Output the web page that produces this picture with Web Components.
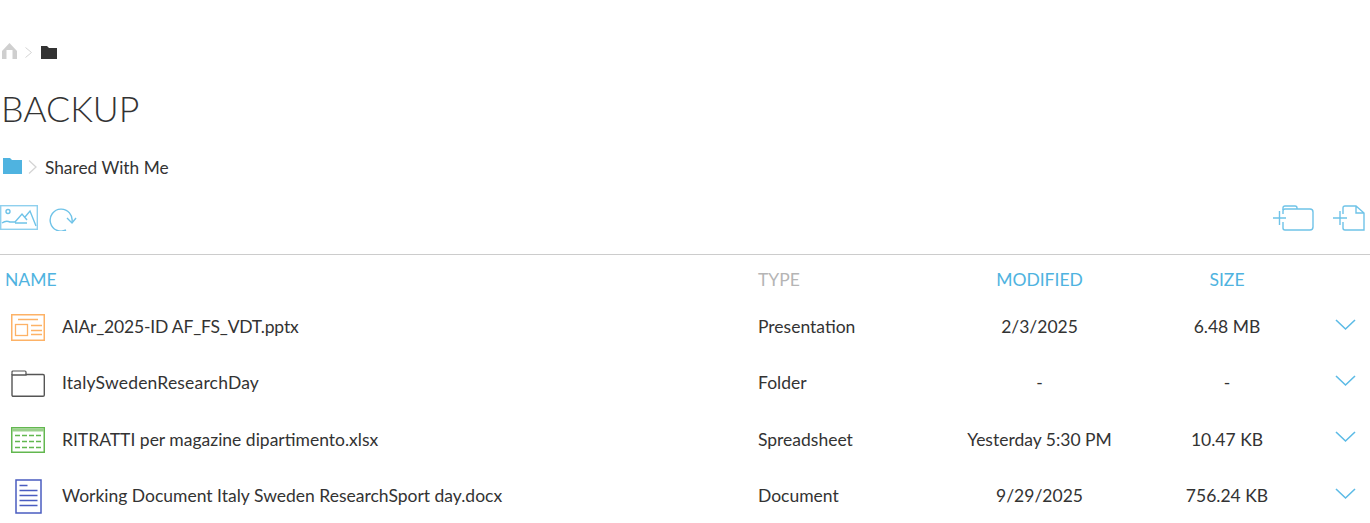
<!DOCTYPE html>
<html lang="en">
  <head>
    <meta charset="UTF-8" />
    <title>Backup</title>
    <style>
      html, body { margin: 0; height: 523px; overflow: hidden; background: #fff; }
      body { font-family: Lato, "Liberation Sans", sans-serif; color: #333; }
    </style>
  </head>
  <body>
    <template id="top-crumbs">
      <style>
        :host { display: flex; align-items: center; height: 20px; padding: 42px 0 0 2px; }
        svg { display: block; }
        .home { margin-top: -2px; }
        .sep { margin: 0 9px 0 8px; }
        .folder { margin-top: 1px; }
      </style>
      <svg class="home" width="15" height="16" viewBox="0 0 15 16"><path fill="#cfcfcf" d="M7.5 0 L15 8 V16 H10.5 V7 H4.5 V16 H0 V8 Z"/></svg>
      <svg class="sep" width="7" height="11" viewBox="0 0 7 11"><path fill="none" stroke="#d4d4d4" d="M0.5 0.5 L6.5 5.5 L0.5 10.5"/></svg>
      <svg class="folder" width="16" height="13" viewBox="0 0 16 13"><path fill="#333" d="M0 0 H6 L8 2 H16 V13 H0 Z"/></svg>
    </template>

    <template id="page-title">
      <style>
        :host { display: block; margin-top: 25px; padding-left: 1px; font-size: 35.7px; line-height: 44px; font-weight: 300; color: #333; }
      </style>
      <slot></slot>
    </template>

    <template id="path-bar">
      <style>
        :host { display: flex; align-items: center; height: 24px; margin-top: 24px; padding-left: 3px; font-size: 17.3px; color: #333; }
        svg { display: block; }
        .folder { margin-top: -3px; }
        .sep { margin: -1px 8px 0 6px; }
      </style>
      <svg class="folder" width="19" height="16" viewBox="0 0 19 16"><path fill="#4fb3e0" d="M0 0 H7 L9 2 H19 V16 H0 Z"/></svg>
      <svg class="sep" width="9" height="14" viewBox="0 0 9 14"><path fill="none" stroke="#d4d4d4" stroke-width="1.3" d="M1 0.5 L8 7 L1 13.5"/></svg>
      <slot></slot>
    </template>

    <template id="tool-bar">
      <style>
        :host { display: flex; justify-content: space-between; align-items: center; height: 40px; margin-top: 19px; margin-bottom: 16px; padding: 0 5px 0 0; }
        .group { display: flex; align-items: center; }
        svg { display: block; fill: none; stroke: #6fc3e8; stroke-width: 1.4; }
        .picture { margin-top: -2px; }
      </style>
      <div class="group" style="gap: 11px">
        <svg class="picture" width="38" height="25" viewBox="0 0 38 25">
          <rect x="0.7" y="0.7" width="36.6" height="23.6" stroke="#8fd0ee"/>
          <circle cx="8" cy="6.5" r="2"/>
          <path d="M2 18 Q6 15 10 17 H15 L22 9 L27 15 M15 18 H27 M25 12 L30 6 L36 21"/>
        </svg>
        <svg width="28" height="25" viewBox="0 0 28 25">
          <path d="M17 24 A11 11 0 1 1 23 16"/>
          <path d="M18 12 L23 17 L27 12"/>
        </svg>
      </div>
      <div class="group" style="gap: 19px">
        <svg width="42" height="26" viewBox="0 0 42 26">
          <path d="M1 13 H14 M7.5 6 V20"/>
          <path d="M11 5 V3 Q11 1 13 1 H23 Q25 1 25 3 V4"/>
          <path d="M11 9 V6 Q11 4 13 4 H38 Q41 4 41 7 V22 Q41 25 38 25 H13 Q11 25 11 23 V17"/>
        </svg>
        <svg width="32" height="26" viewBox="0 0 32 26">
          <path d="M0 13 H14 M7 6 V20"/>
          <path d="M10 9 V3 Q10 1 12 1 H23 L31 8 V25 H12 Q10 25 10 23 V17 M23 1 V8 H31"/>
        </svg>
      </div>
    </template>

    <template id="list-head">
      <style>
        :host { display: grid; grid-template-columns: 758px 190px 183px 192px; align-items: center; box-sizing: border-box; height: 44.4px; padding-top: 5px; border-top: 1px solid #ccc; font-size: 17.5px; color: #4fb3e0; }
        .name { padding-left: 5px; }
        .type { color: #b5b5b5; }
        .mid { text-align: center; }
      </style>
      <div class="name">NAME</div><div class="type">TYPE</div><div class="mid">MODIFIED</div><div class="mid">SIZE</div>
    </template>

    <template id="file-row">
      <style>
        :host { display: grid; grid-template-columns: 62px 696px 190px 183px 192px 1fr; align-items: center; height: 56.4px; font-size: 17.5px; color: #333; }
        .ico { display: flex; justify-content: center; padding: 2px 6px 0 0; }
        .label { letter-spacing: var(--name-spacing, 0); }
        .mid { text-align: center; }
        .arrow { display: flex; margin: -4px 0 0 12px; }
        svg { display: block; }
      </style>
      <div class="ico"><slot name="icon"></slot></div>
      <div class="label"><slot></slot></div>
      <div id="type"></div>
      <div class="mid" id="modified"></div>
      <div class="mid" id="size"></div>
      <div class="arrow">
        <svg width="21" height="12" viewBox="0 0 21 12"><path fill="none" stroke="#5cbbe6" stroke-width="1.6" d="M1 1 L10.5 10 L20 1"/></svg>
      </div>
    </template>

    <top-crumbs></top-crumbs>
    <page-title>BACKUP</page-title>
    <path-bar>Shared With Me</path-bar>
    <tool-bar></tool-bar>
    <list-head></list-head>

    <file-row type="Presentation" modified="2/3/2025" size="6.48 MB" style="--name-spacing: -0.18px">
      <svg slot="icon" width="34" height="27" viewBox="0 0 34 27" fill="none" stroke="#fdb266">
        <rect x="0.75" y="0.75" width="32.5" height="25.5" stroke-width="1.5"/>
        <path d="M7 5.5 H27 M20 11.5 H31 M20 16.5 H31 M20 20.5 H31" stroke-width="1.3"/>
        <rect x="4.5" y="10.5" width="12" height="11" stroke-width="1.3"/>
      </svg>
      AIAr_2025-ID AF_FS_VDT.pptx
    </file-row>
    <file-row type="Folder" modified="-" size="-" style="--name-spacing: 0.18px">
      <svg slot="icon" width="34" height="27" viewBox="0 0 34 27" fill="none" stroke="#555">
        <path d="M1 5 V2 Q1 1 2 1 H14 Q15 1 15 2 V4" stroke-width="1.2"/>
        <path d="M1 25 V5 H15 V4.5 H32 Q33.3 4.5 33.3 6 V25 Q33.3 26.3 32 26.3 H2.3 Q1 26.3 1 25 Z" stroke-width="1.4"/>
      </svg>
      ItalySwedenResearchDay
    </file-row>
    <file-row type="Spreadsheet" modified="Yesterday 5:30 PM" size="10.47 KB">
      <svg slot="icon" width="34" height="26" viewBox="0 0 34 26" fill="none" stroke="#62b74f">
        <rect x="0.75" y="0.75" width="32.5" height="24.5" stroke-width="1.5"/>
        <path d="M1 3 H33" stroke="#9bd08c" stroke-width="3"/>
        <path d="M4 8.5 H9 M11 8.5 H16 M18 8.5 H23 M25 8.5 H30 M4 14.5 H9 M11 14.5 H16 M18 14.5 H23 M25 14.5 H30 M4 20.5 H9 M11 20.5 H16 M18 20.5 H23 M25 20.5 H30" stroke-width="1.4"/>
      </svg>
      RITRATTI per magazine dipartimento.xlsx
    </file-row>
    <file-row type="Document" modified="9/29/2025" size="756.24 KB">
      <svg slot="icon" width="27" height="35" viewBox="0 0 27 35" fill="none" stroke="#4a5cc0">
        <rect x="1" y="1" width="25" height="33" stroke-width="1.5"/>
        <path d="M4.5 6.5 H12.5 M4.5 11.5 H22.5 M4.5 16.5 H22.5 M4.5 21.5 H22.5 M4.5 26.5 H22.5" stroke-width="1.3"/>
      </svg>
      Working Document Italy Sweden ResearchSport day.docx
    </file-row>

    <script>
      class TemplateElement extends HTMLElement {
        constructor() {
          super();
          this.attachShadow({ mode: "open" }).appendChild(
            document.getElementById(this.localName).content.cloneNode(true)
          );
        }
      }

      class FileRow extends TemplateElement {
        connectedCallback() {
          ["type", "modified", "size"].forEach((name) => {
            this.shadowRoot.getElementById(name).textContent = this.getAttribute(name);
          });
        }
      }

      ["top-crumbs", "page-title", "path-bar", "tool-bar", "list-head"].forEach((name) => {
        customElements.define(name, class extends TemplateElement {});
      });
      customElements.define("file-row", FileRow);
    </script>
  </body>
</html>
